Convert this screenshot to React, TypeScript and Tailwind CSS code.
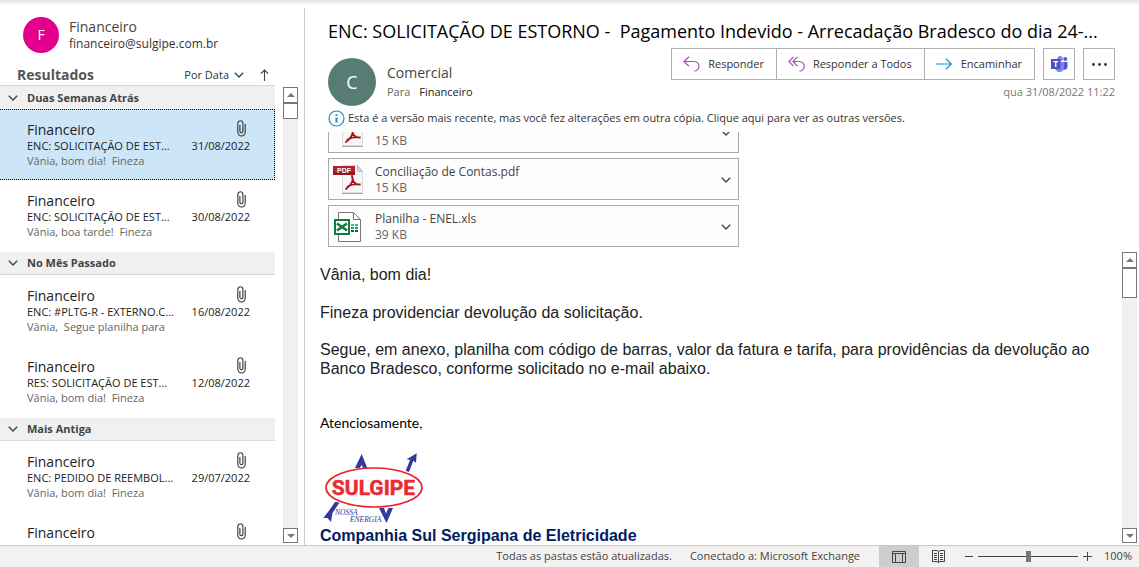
import type { ReactNode } from "react";

type Mail = { id: number; subject?: string; date?: string; preview?: string; selected?: boolean };
type Group = { title: string; mails: Mail[] };

const groups: Group[] = [
  {
    title: "Duas Semanas Atrás",
    mails: [
      { id: 1, subject: "ENC: SOLICITAÇÃO DE EST...", date: "31/08/2022", preview: "Vânia, bom dia!  Fineza", selected: true },
      { id: 2, subject: "ENC: SOLICITAÇÃO DE EST...", date: "30/08/2022", preview: "Vânia, boa tarde!  Fineza" },
    ],
  },
  {
    title: "No Mês Passado",
    mails: [
      { id: 3, subject: "ENC: #PLTG-R - EXTERNO.C...", date: "16/08/2022", preview: "Vânia,  Segue planilha para" },
      { id: 4, subject: "RES: SOLICITAÇÃO DE EST...", date: "12/08/2022", preview: "Vânia, bom dia!  Fineza" },
    ],
  },
  {
    title: "Mais Antiga",
    mails: [
      { id: 5, subject: "ENC: PEDIDO DE REEMBOL...", date: "29/07/2022", preview: "Vânia, bom dia!  Fineza" },
      { id: 6 },
    ],
  },
];

function Chevron() {
  return (
    <svg width="10" height="6" viewBox="0 0 10 6" fill="none" stroke="#444" strokeWidth="1.4" aria-hidden="true">
      <path d="M.8.8 5 5 9.200.8" />
    </svg>
  );
}

function Paperclip() {
  return (
    <svg width="9" height="17" viewBox="0 0 9 17" fill="none" stroke="#333" strokeWidth="1.100" aria-hidden="true">
      <path d="M2.900 5v6.200a1.500 1.500 0 0 0 3 0V3.600A2.300 2.600 0 0 0 3.500.8C2 .8.8 1.900.8 4v8a3.700 4 0 0 0 7.400 0V4" />
    </svg>
  );
}

function Scrollbar({ tall = false }: { tall?: boolean }) {
  return (
    <div className="flex w-[15px] shrink-0 flex-col bg-[#f0f0f0]">
      <button aria-label="Rolar para cima" className="grid h-4 w-full shrink-0 place-items-center border border-[#777] bg-white">
        <svg width="8" height="4" viewBox="0 0 8 4" fill="#777"><path d="M0 4 4 0l4 4z" /></svg>
      </button>
      <div className={tall ? "h-[30px] border border-[#777] bg-white" : "h-4 border border-[#777] bg-white"} />
      <button aria-label="Rolar para baixo" className="mt-auto grid h-[15px] w-full shrink-0 place-items-center border border-[#777] bg-white">
        <svg width="8" height="4" viewBox="0 0 8 4" fill="#777"><path d="M0 0h8L4 4z" /></svg>
      </button>
    </div>
  );
}

function MailRow({ mail }: { mail: Mail }) {
  return (
    <li className="h-[71px] shrink-0">
      <button
        className={
          mail.selected
            ? "flex h-full w-full flex-col border border-l-0 border-dotted border-black bg-[#cde6f7] pt-[11px] pr-6 pl-[27px] text-left"
            : "flex h-full w-full flex-col pt-3 pr-[25px] pl-[27px] text-left"
        }
      >
        <span className="flex h-[17px] w-full items-start justify-between text-sm leading-[18px] text-[#222]">
          Financeiro
          <span className="-mt-px pr-1"><Paperclip /></span>
        </span>
        {mail.subject && (
          <span className="flex w-full justify-between text-[11px] leading-[15px] whitespace-nowrap text-[#222]">
            <span>{mail.subject}</span>
            <span>{mail.date}</span>
          </span>
        )}
        {mail.preview && <span className="text-[11px] leading-[15px] whitespace-pre text-[#666]">{mail.preview}</span>}
      </button>
    </li>
  );
}

function Sidebar() {
  return (
    <aside className="flex w-[305px] shrink-0 flex-col border-r border-[#d0d0d0]">
      <div className="flex items-center gap-[10px] pt-[9px] pl-[23px]">
        <div className="grid size-9 place-items-center rounded-full bg-[#e3008c] text-sm text-white">F</div>
        <div>
          <p className="text-sm leading-[18px] text-[#444]">Financeiro</p>
          <p className="text-[12px] leading-4 text-[#333]">financeiro@sulgipe.com.br</p>
        </div>
      </div>
      <div className="mt-[11px] flex h-[21px] items-center pr-[35px] pl-[17px]">
        <h2 className="text-[14px] leading-5 font-bold text-[#555]">Resultados</h2>
        <button className="ml-auto flex items-center gap-[5px] text-[11px] leading-5 text-[#333]">
          Por Data <Chevron />
        </button>
        <button aria-label="Inverter ordem" className="ml-4">
          <svg width="9" height="12" viewBox="0 0 9 12" fill="none" stroke="#444" strokeWidth="1.100"><path d="M4.500 12V1M1 4.500 4.500 1 8 4.500" /></svg>
        </button>
      </div>
      <div className="flex min-h-0 flex-1 gap-2 pr-1.5">
        <div className="flex min-w-0 flex-1 flex-col overflow-hidden">
          {groups.map((g, i) => (
            <section key={g.title} className="shrink-0">
              <button
                className={
                  i === 0
                    ? "flex h-6 w-full items-center gap-[9px] border-t border-[#dadada] bg-[#f0f0f0] pt-px pl-2 text-[11px] font-bold text-[#444]"
                    : "mt-px flex h-[23px] w-full items-center gap-[9px] border-b border-[#dadada] bg-[#f0f0f0] pl-2 text-[11px] font-bold text-[#444]"
                }
              >
                <Chevron />
                {g.title}
              </button>
              <ul>
                {g.mails.map((m) => (
                  <MailRow key={m.id} mail={m} />
                ))}
              </ul>
            </section>
          ))}
        </div>
        <div className="flex pt-0.5 pb-0.5"><Scrollbar /></div>
      </div>
    </aside>
  );
}

function PdfIcon({ label = true }: { label?: boolean }) {
  return (
    <svg width="32" height="32" viewBox="0 0 32 32" aria-hidden="true">
      <path d="M9.500 1.500h15l5 6v21h-20z" fill="#f7f7f7" stroke="#dcdcdc" />
      <path d="M9 29.500h21" stroke="#a5a5a5" />
      <path d="M24.500 1.500v6h5z" fill="#ddd" stroke="#bbb" />
      <path d="M0 2h22v9H0z" fill="#ae2032" />
      <path d="M0 8h22v3H0z" fill="#8f1826" />
      {label && (
        <text x="4" y="9" fontSize="7" fontWeight="bold" fill="#fff" fontFamily="Liberation Sans, sans-serif">PDF</text>
      )}
      <path d="M19 12c2 4-1 9-6 13M19 12c0 5 3 9 8.500 8.500-4-1-9 0-13 2" fill="none" stroke="#a8101c" strokeWidth="1.800" strokeLinecap="round" />
    </svg>
  );
}

function XlsIcon() {
  return (
    <svg width="32" height="32" viewBox="0 0 32 32" aria-hidden="true">
      <path d="M5.500 1.500h15l7 7v22h-22z" fill="#fff" stroke="#777" />
      <path d="M20.500 1.500v7h7" fill="none" stroke="#777" />
      <path d="M1 8h16v16H1z" fill="#107c41" />
      <path d="M3 10h12v12H3z" fill="#fff" />
      <path d="m4 12.500 10 7m0-7-10 7" stroke="#107c41" strokeWidth="2.600" />
      <path d="M18 13h3v2h-3zm4 0h3v2h-3z" fill="#33c481" />
      <path d="M18 16h3v2h-3zm4 0h3v2h-3z" fill="#21a366" />
      <path d="M18 19h3v2h-3zm4 0h3v2h-3z" fill="#185c37" />
    </svg>
  );
}

function Attachment({ icon, name, size }: { icon: ReactNode; name?: string; size: string }) {
  return (
    <button className="flex h-[42px] w-full shrink-0 items-center border border-[#ababab] bg-[#fdfdfd] pt-px pr-[7px] pl-1 text-left text-[12px] leading-4 text-[#444]">
      {icon}
      <span className="ml-2.5 flex flex-1 flex-col">
        <span className="min-h-4">{name}</span>
        <span className="text-[#666]">{size}</span>
      </span>
      <Chevron />
    </button>
  );
}

function ReplyIcon() {
  return (
    <svg width="17" height="16" viewBox="0 0 17 16" fill="none" stroke="#b146c2" strokeWidth="1.200" aria-hidden="true">
      <path d="M6 .8.900 5.500 6 10.200M1 5.500h10.200a4.400 4.400 0 0 1 0 9.500" />
    </svg>
  );
}

function ReplyAllIcon() {
  return (
    <svg width="17" height="16" viewBox="0 0 17 16" fill="none" stroke="#b146c2" strokeWidth="1.200" aria-hidden="true">
      <path d="M5.500.8.900 5.500l4.600 4.700M9.500.8 4.900 5.500l4.600 4.700M5 5.500h6.500a4.400 4.400 0 0 1 0 9.500" />
    </svg>
  );
}

function ForwardIcon() {
  return (
    <svg width="17" height="12" viewBox="0 0 17 12" fill="none" stroke="#1e8bcd" strokeWidth="1.200" aria-hidden="true">
      <path d="M0 6h15M10 .8 15.300 6 10 11.200" />
    </svg>
  );
}

function TeamsIcon() {
  return (
    <svg width="18" height="16" viewBox="0 0 18 16" aria-hidden="true">
      <circle cx="15.200" cy="3" r="2" fill="#5059c9" />
      <path d="M12 6h5.500v5a3 3 0 0 1-5 2z" fill="#5059c9" />
      <circle cx="10" cy="2.700" r="2.700" fill="#7b83eb" />
      <path d="M5 6h9v5.500a4.500 4.500 0 0 1-9 0z" fill="#7b83eb" />
      <path d="M1 3h9.500v10H1z" fill="#4b53bc" />
      <path d="M3.300 5.600h5M5.800 5.600v5.400" stroke="#fff" strokeWidth="1.300" />
    </svg>
  );
}

function SulgipeLogo() {
  return (
    <svg width="104" height="72" viewBox="0 0 104 72" role="img" aria-label="Sulgipe">
      <g fill="#33389a">
        <path d="m39.700 2 5.500 14h-4l-1.500-3-2 3H33z" />
        <path d="m94.700 1.300-.7 9.400-2.700-2L87 20l-3.300-1.300L88 8l-3.300-.7z" />
        <path d="m13 50 4.500.5-7 10.500-1.500 9-3.500-4H1.300l6.200-8z" />
        <path d="M57 56h5l2 5.500 2.500-5.500H71l-6.500 15z" />
      </g>
      <ellipse cx="52" cy="35.500" rx="48" ry="19.500" fill="#fff" stroke="#e8232c" strokeWidth="1.700" />
      <text x="51.500" y="43" textAnchor="middle" fontFamily="Roboto, Liberation Sans, sans-serif" fontWeight="bold" fontSize="21" fill="#ec2a34" stroke="#ec2a34" strokeWidth=".5">SULGIPE</text>
      <g fontFamily="Liberation Serif, serif" fontStyle="italic" fontSize="7.500" fill="#33389a">
        <text x="13" y="63">NOSSA</text>
        <text x="28" y="70">ENERGIA</text>
      </g>
    </svg>
  );
}

function ReadingPane() {
  return (
    <main className="flex min-w-0 flex-1 flex-col">
      <header className="pt-2 pr-6 pl-[23px]">
        <h1 className="truncate text-[18px] leading-[30px] whitespace-pre text-black">
          ENC: SOLICITAÇÃO DE ESTORNO -  Pagamento Indevido - Arrecadação Bradesco do dia 24-...
        </h1>
        <div className="mt-0.5 flex h-[58px]">
          <div className="mt-2.5 grid size-12 shrink-0 place-items-center rounded-full bg-[#567c73] text-[18px] text-white">C</div>
          <div className="mt-4 ml-[11px]">
            <p className="text-sm leading-[18px] text-[#444]">Comercial</p>
            <p className="text-[11px] leading-5 text-[#666]">
              Para <span className="ml-[6px] text-[#222]">Financeiro</span>
            </p>
          </div>
          <div className="ml-auto flex flex-col items-end">
            <div className="flex gap-2 text-[11px] text-[#333]">
              <div className="flex h-8 divide-x divide-[#b1aeab] border border-[#b1aeab]">
                <button className="flex items-center gap-2 pr-3 pl-[11px]"><ReplyIcon />Responder</button>
                <button className="flex items-center gap-2 pr-3 pl-[11px]"><ReplyAllIcon />Responder a Todos</button>
                <button className="flex items-center gap-2 pr-3 pl-[11px]"><ForwardIcon />Encaminhar</button>
              </div>
              <button aria-label="Compartilhar no Teams" className="grid size-8 place-items-center border border-[#b1aeab]"><TeamsIcon /></button>
              <button aria-label="Mais ações" className="grid size-8 place-items-center border border-[#b1aeab]">
                <svg width="15" height="3" viewBox="0 0 15 3" fill="#333"><circle cx="1.500" cy="1.500" r="1.400" /><circle cx="7.500" cy="1.500" r="1.400" /><circle cx="13.500" cy="1.500" r="1.400" /></svg>
              </button>
            </div>
            <p className="mt-1 text-[11px] leading-4 text-[#777]">qua 31/08/2022 11:22</p>
          </div>
        </div>
        <button className="mt-[3px] flex h-[18px] items-center gap-[3px] text-[11px] whitespace-nowrap text-[#333]">
          <svg width="17" height="17" viewBox="0 0 17 17" fill="none" stroke="#1e8bcd" aria-hidden="true">
            <circle cx="8.500" cy="8.500" r="7.500" strokeWidth="1.200" />
            <path d="M8.500 7.500v5M8.500 4.200v1.900" strokeWidth="2" />
          </svg>
          Esta é a versão mais recente, mas você fez alterações em outra cópia. Clique aqui para ver as outras versões.
        </button>
        <div className="mt-[5px] flex w-[411px] max-w-full flex-col gap-[5px]">
          <div className="flex h-[21px] flex-col justify-end overflow-hidden">
            <Attachment icon={<PdfIcon label={false} />} size="15 KB" />
          </div>
          <Attachment icon={<PdfIcon />} name="Conciliação de Contas.pdf" size="15 KB" />
          <Attachment icon={<XlsIcon />} name="Planilha - ENEL.xls" size="39 KB" />
        </div>
      </header>
      <div className="mt-[5px] flex min-h-0 flex-1 pr-0.5">
        <article className="min-w-0 flex-1 overflow-hidden pt-[13px] pr-6 pl-[15px] font-['Liberation_Sans',Arial,sans-serif] text-base leading-[19px] text-[#222]">
          <p>Vânia, bom dia!</p>
          <p className="mt-[19px]">Fineza providenciar devolução da solicitação.</p>
          <p className="mt-[18px]">
            Segue, em anexo, planilha com código de barras, valor da fatura e tarifa, para providências da devolução ao Banco Bradesco, conforme solicitado no e-mail abaixo.
          </p>
          <p className="mt-[35px] font-[Lato,'Open_Sans',sans-serif] text-sm leading-[19px] text-black">Atenciosamente,</p>
          <div className="mt-5 ml-0.5"><SulgipeLogo /></div>
          <p className="mt-0.5 font-bold text-[#002060]">Companhia Sul Sergipana de Eletricidade</p>
        </article>
        <div className="flex pb-0.5"><Scrollbar tall /></div>
      </div>
    </main>
  );
}

function StatusBar() {
  return (
    <footer className="flex h-[22px] shrink-0 items-center border-t border-[#c6c6c6] bg-[#f3f2f1] pr-[7px] text-[11px] text-[#444]">
      <span className="ml-auto">Todas as pastas estão atualizadas.</span>
      <span className="ml-[18px]">Conectado a: Microsoft Exchange</span>
      <button aria-label="Exibição normal" className="ml-[19px] grid h-full w-10 place-items-center bg-[#cfcdcc]">
        <svg width="14" height="12" viewBox="0 0 14 12" fill="none" stroke="#444"><path d="M.5.5h13v11H.5zM.5 2.500h13M3.500 2.500v9M10.500 2.500v9" /></svg>
      </button>
      <button aria-label="Exibição de leitura" className="ml-[13px]">
        <svg width="13" height="13" viewBox="0 0 13 13" fill="none" stroke="#444"><path d="M6.500 1.500v11M6.500 1.500 5 .5H.5v11H5l1.500 1 1.500-1h4.500V.5H8zM2 3.500h3M2 5.500h3M2 7.500h3M2 9.500h3M8 3.500h3M8 5.500h3M8 7.500h3M8 9.500h3" /></svg>
      </button>
      <button aria-label="Reduzir" className="ml-5">
        <svg width="8" height="9" viewBox="0 0 8 9" stroke="#444"><path d="M0 4.500h8" /></svg>
      </button>
      <input
        type="range"
        aria-label="Zoom"
        defaultValue={50}
        className="mx-[5px] h-3 w-[100px] appearance-none bg-[linear-gradient(#444,#444)] bg-[length:100%_1px] bg-center bg-no-repeat [&::-webkit-slider-thumb]:h-[11px] [&::-webkit-slider-thumb]:w-[5px] [&::-webkit-slider-thumb]:appearance-none [&::-webkit-slider-thumb]:bg-[#777]"
      />
      <button aria-label="Ampliar">
        <svg width="9" height="9" viewBox="0 0 9 9" stroke="#444"><path d="M0 4.500h9M4.500 0v9" /></svg>
      </button>
      <span className="ml-3">100%</span>
    </footer>
  );
}

export default function App() {
  return (
    <div className="flex h-screen flex-col overflow-hidden bg-white font-['Open_Sans','Noto_Sans',sans-serif]">
      <div className="h-2 shrink-0 bg-linear-to-b from-[#e4e4e4] to-white to-70%" />
      <div className="flex min-h-0 flex-1">
        <Sidebar />
        <ReadingPane />
      </div>
      <StatusBar />
    </div>
  );
}
